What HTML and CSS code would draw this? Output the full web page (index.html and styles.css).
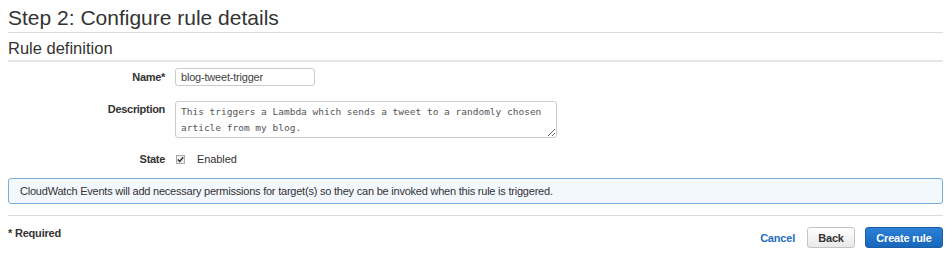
FILE: index.html
```html
<!DOCTYPE html>
<html>
<head>
<meta charset="utf-8">
<link rel="stylesheet" href="styles.css">
</head>
<body>
<div class="page">
  <h1 class="title">Step 2: Configure rule details</h1>
  <h2 class="section">Rule definition</h2>
  <div class="form">
    <div class="row row-name">
      <label class="label">Name*</label>
      <div class="field"><input class="text-input" type="text" value="blog-tweet-trigger"></div>
    </div>
    <div class="row row-desc">
      <label class="label label-desc">Description</label>
      <div class="field"><textarea class="text-area">This triggers a Lambda which sends a tweet to a randomly chosen article from my blog.</textarea></div>
    </div>
    <div class="row row-state">
      <label class="label">State</label>
      <div class="field state-field">
        <span class="checkbox"><svg width="7" height="7" viewBox="0 0 7 7"><path d="M0.8 3.6 L2.7 5.5 L6.2 1.2" fill="none" stroke="#333" stroke-width="1.4"/></svg></span>
        <span class="state-text">Enabled</span>
      </div>
    </div>
  </div>
  <div class="info">CloudWatch Events will add necessary permissions for target(s) so they can be invoked when this rule is triggered.</div>
  <div class="footer">
    <div class="required">* Required</div>
    <div class="actions">
      <a class="cancel">Cancel</a>
      <button class="btn btn-back">Back</button>
      <button class="btn btn-primary">Create rule</button>
    </div>
  </div>
</div>
</body>
</html>
```
FILE: styles.css
```css
html, body {
  margin: 0;
  padding: 0;
  background: #fff;
}
body {
  font-family: "Liberation Sans", Arial, sans-serif;
  color: #333;
}
.page {
  padding: 0 8px;
}
.title {
  font-size: 21px;
  font-weight: normal;
  line-height: 24px;
  margin: 6px 0 0 0;
  padding-bottom: 2px;
  border-bottom: 1px solid #dcdcdc;
  color: #333;
}
.section {
  font-size: 16.5px;
  font-weight: normal;
  line-height: 20px;
  margin: 5px 0 0 0;
  padding-bottom: 2px;
  border-bottom: 2px solid #e6e6e6;
  color: #333;
}
.form {
  display: flex;
  flex-direction: column;
}
.row {
  display: grid;
  grid-template-columns: 157px 1fr;
  column-gap: 10px;
  align-items: center;
}
.row-name { margin-top: 6px; }
.row-desc { margin-top: 15px; align-items: start; }
.row-state { margin-top: 15px; }
.label {
  text-align: right;
  font-size: 11px;
  font-weight: bold;
  letter-spacing: -0.3px;
  color: #333;
}
.label-desc { padding-top: 2px; }
.text-input {
  box-sizing: border-box;
  width: 140px;
  height: 18px;
  border: 1px solid #ccc;
  border-radius: 3px;
  padding: 0 5px;
  margin: 0;
  font-family: "Liberation Sans", Arial, sans-serif;
  font-size: 11px;
  letter-spacing: -0.2px;
  color: #444;
  display: block;
}
.text-area {
  box-sizing: border-box;
  width: 382px;
  height: 37px;
  border: 1px solid #ccc;
  border-radius: 3px;
  padding: 2px 5px 0 5px;
  margin: 0;
  font-family: "DejaVu Sans Mono", monospace;
  font-size: 9.5px;
  line-height: 16px;
  color: #555;
  display: block;
  resize: both;
  overflow: hidden;
}
.state-field {
  display: flex;
  align-items: center;
  gap: 12px;
}
.checkbox {
  box-sizing: border-box;
  width: 9px;
  height: 9px;
  border: 1px solid #aaa;
  background: #eee;
  display: flex;
  align-items: center;
  justify-content: center;
  margin-left: 1px;
}
.state-text {
  font-size: 11px;
  letter-spacing: -0.1px;
  color: #333;
}
.info {
  margin-top: 13px;
  box-sizing: border-box;
  height: 26px;
  border: 1px solid #78acdc;
  border-radius: 3px;
  background: #f2f8fd;
  font-size: 11px;
  letter-spacing: -0.22px;
  line-height: 24px;
  padding: 0 11px;
  color: #333;
}
.footer {
  margin-top: 11px;
  border-top: 1px solid #dcdcdc;
  display: flex;
  justify-content: space-between;
  align-items: flex-start;
}
.required {
  font-size: 11px;
  font-weight: bold;
  letter-spacing: -0.2px;
  margin-top: 11px;
  color: #333;
}
.actions {
  display: flex;
  align-items: center;
  margin-top: 11px;
}
.cancel {
  font-size: 11px;
  font-weight: bold;
  letter-spacing: -0.2px;
  color: #1f6dc2;
  margin-right: 12px;
}
.btn {
  box-sizing: border-box;
  height: 21px;
  border-radius: 3px;
  font-family: "Liberation Sans", Arial, sans-serif;
  font-size: 11px;
  font-weight: bold;
  letter-spacing: -0.2px;
  padding: 0;
  margin: 0;
}
.btn-back {
  width: 48px;
  border: 1px solid #c4c4c4;
  background: linear-gradient(#ffffff, #e8e8e8);
  color: #333;
  margin-right: 10px;
}
.btn-primary {
  width: 78px;
  border: 1px solid #1a5ea8;
  background: linear-gradient(#2b80d6, #1766ba);
  color: #fff;
}
```
